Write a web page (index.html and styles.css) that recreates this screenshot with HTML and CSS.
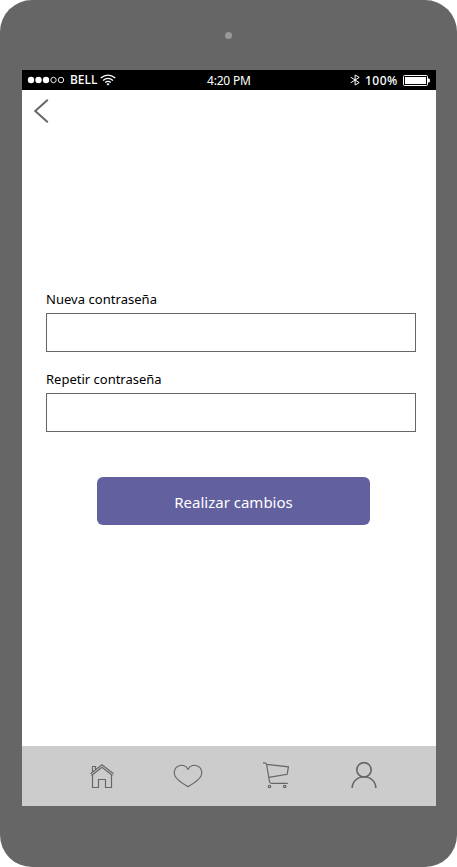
FILE: index.html
```html
<!DOCTYPE html>
<html lang="es">
<head>
<meta charset="utf-8">
<title>Nueva contraseña</title>
<link rel="stylesheet" href="styles.css">
</head>
<body>
<div class="phone">
  <div class="bezel"><span class="camera"></span></div>
  <main class="screen">
    <header class="status">
      <div class="status-left">
        <svg class="signal" width="38" height="8" viewBox="0 0 38 8" fill="#fff">
          <circle cx="4" cy="4" r="3.2"/><circle cx="11.5" cy="4" r="3.2"/><circle cx="19" cy="4" r="3.2"/>
          <g fill="none" stroke="#fff" stroke-width=".9"><circle cx="26.5" cy="4" r="2.7"/><circle cx="34" cy="4" r="2.7"/></g>
        </svg>
        <span class="carrier">BELL</span>
        <svg class="wifi" width="16" height="12" viewBox="0 0 16 12" fill="none" stroke="#fff" stroke-width="1.3">
          <path d="M.7 4.1Q8-2 15.3 4.1M3 6.4Q8 2.2 13 6.4M5.2 8.6Q8 6.2 10.8 8.6"/>
          <path d="M6.4 9.9Q8 8.7 9.6 9.9L8 11.5Z" fill="#fff" stroke="none"/>
        </svg>
      </div>
      <span class="time">4:20 PM</span>
      <div class="status-right">
        <svg class="bluetooth" width="10" height="12" viewBox="0 0 10 12" fill="none" stroke="#fff">
          <path d="M.7 3.2 9.2 8.6 5.1 11V1L9.2 3.4.7 8.8"/>
        </svg>
        <span class="percent">100%</span>
        <svg class="battery" width="28" height="11" viewBox="0 0 28 11">
          <rect x=".5" y=".5" width="24" height="10" rx="1" fill="none" stroke="#fff"/>
          <rect x="2" y="2" width="21" height="7" fill="#fff"/>
          <path d="M25 3.5h1q1 0 1 2t-1 2h-1z" fill="#fff"/>
        </svg>
      </div>
    </header>
    <div class="content">
      <a class="back" href="#" aria-label="Volver">
        <svg width="16" height="26" viewBox="0 0 16 26" fill="none" stroke="#666" stroke-width="2"><path d="M13.8 1.8 1.2 13.1 13.8 24.3"/></svg>
      </a>
      <form class="form">
        <label class="label first" for="new">Nueva contraseña</label>
        <input class="field" id="new" type="password">
        <label class="label second" for="repeat">Repetir contraseña</label>
        <input class="field" id="repeat" type="password">
        <button class="submit" type="button"><span class="submit-text">Realizar cambios</span></button>
      </form>
    </div>
    <nav class="nav">
      <svg width="28" height="28" viewBox="0 0 28 28" fill="none" stroke="#666" stroke-width="1.15">
        <path d="M3.5 12.5V25.5H9.5V17.5H16.5V25.5H22.5V12.5M3.5 10V4.5H6.5V7.5"/>
        <path d="M1.5 11.8 13 2.7 24.5 11.8M2.5 13.5 13 5.2 23.5 13.5"/>
      </svg>
      <svg width="30" height="28" viewBox="0 0 30 28" fill="none" stroke="#666" stroke-width="1.1">
        <path d="M15 7.2C13 2.8 8.5 2.6 5.5 4 1.5 5.8.2 10.2 2 14 4.2 18.6 9.5 21.4 15 24.7 20.5 21.4 25.8 18.6 28 14 29.8 10.2 28.5 5.8 24.5 4 21.5 2.6 17 2.8 15 7.2Z"/>
      </svg>
      <svg width="28" height="28" viewBox="0 0 28 28" fill="none" stroke="#666" stroke-width="1.2">
        <path d="M1 .8H2.5Q4.3.8 4.6 2.5L7.5 19.5Q7.8 21.3 9.7 21.3H25.8M4.7 2.4 26.4 4.8 25.2 12.3 6.8 15.4"/>
        <circle cx="7.5" cy="24.5" r="1.2"/><circle cx="22.7" cy="24.5" r="1.2"/>
      </svg>
      <svg width="28" height="28" viewBox="0 0 28 28" fill="none" stroke="#666" stroke-width="1.6">
        <circle cx="14" cy="7.8" r="7.2"/><path d="M2.2 26A11.8 11.3 0 0 1 25.8 26"/>
      </svg>
    </nav>
  </main>
</div>
</body>
</html>
```
FILE: styles.css
```css
* { box-sizing: border-box; }
body { margin: 0; background: #fff; font-family: "Noto Sans", "Open Sans", sans-serif; color: #000; }
.phone { width: 457px; height: 867px; padding: 0 21px 61px 22px; background: #666; border-radius: 32px; display: flex; flex-direction: column; }
.bezel { height: 70px; padding: 32px 0 0 203px; }
.camera { display: block; width: 7px; height: 7px; border-radius: 50%; background: #999; }
.screen { flex: 1; background: #fff; display: flex; flex-direction: column; }
.status { height: 20px; background: #000; color: #fff; display: grid; grid-template-columns: 1fr 44px 1fr; align-items: center; font-size: 12px; line-height: 20px; white-space: nowrap; }
.status-left, .status-right { display: flex; align-items: center; }
.status-left { padding-left: 5px; }
.carrier { margin-left: 5px; width: 27px; font-weight: 500; }
.wifi { margin: 0 0 1px 3px; }
.time { letter-spacing: -.2px; padding-top: 2px; line-height: 18px; }
.status-right { justify-content: flex-end; padding-right: 5px; }
.percent { margin-left: 5px; width: 33px; font-weight: 500; letter-spacing: .5px; padding-top: 2px; line-height: 18px; }
.battery { margin-left: 5px; }
.content { flex: 1; padding: 8px 20px 0 12px; }
.back { display: block; width: 16px; height: 26px; }
.back svg { display: block; }
.form { display: flex; flex-direction: column; padding: 165px 0 0 12px; }
.label { font-size: 13px; line-height: 20px; height: 20px; white-space: nowrap; }
.first { letter-spacing: .04px; }
.second { margin-top: 17px; }
.field { width: 370px; height: 39px; margin: 4px 0 0; border: 1px solid #666; border-radius: 0; background: #fff; padding: 0 10px; }
.submit { width: 273px; height: 48px; margin: 45px 0 0 51px; border: 0; border-radius: 6px; background: #62609e; color: #fff; font: 15px/24px "Noto Sans", "Open Sans", sans-serif; padding: 1px 0 0; }
.nav { height: 60px; background: #ccc; display: grid; grid-template-columns: 84px 89px 88px 28px; align-items: start; padding: 16px 0 0 67px; }
```
